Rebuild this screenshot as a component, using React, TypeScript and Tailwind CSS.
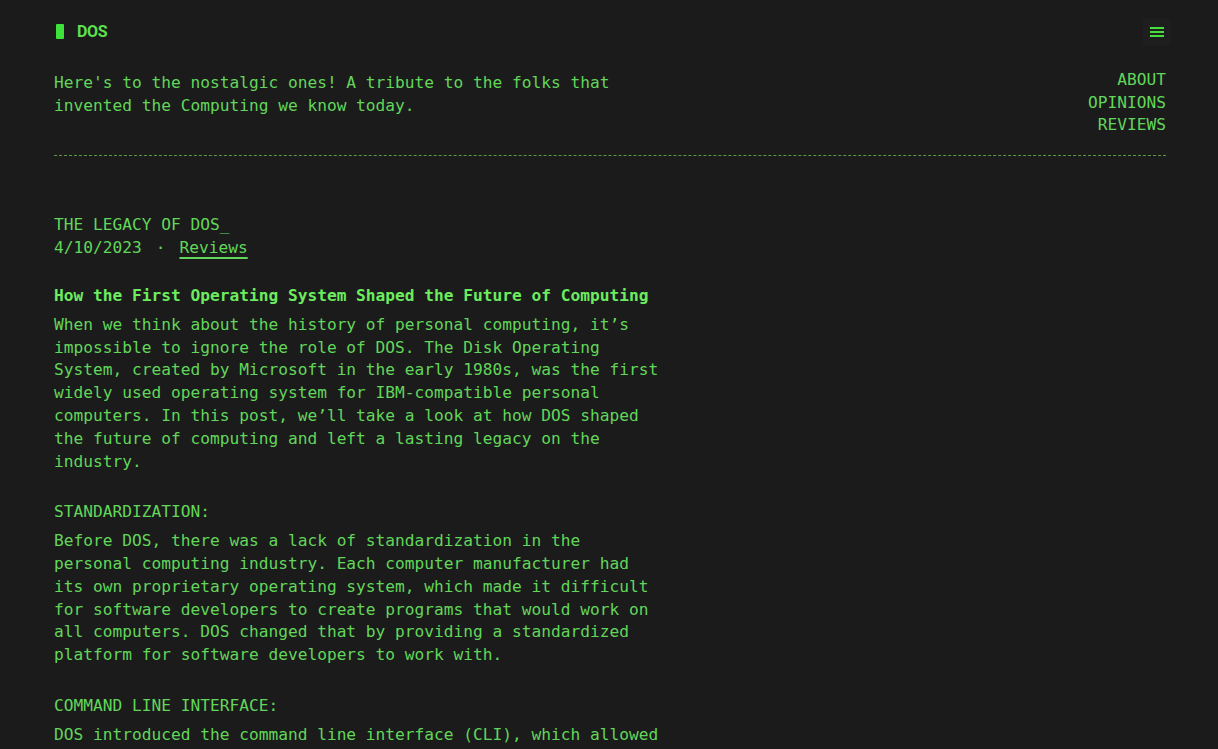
import React from "react";

const mono = { fontFamily: '"DejaVu Sans Mono", "Liberation Mono", monospace' };

export default function App() {
  return (
    <div
      className="min-h-[749px] w-full bg-[#1b1b1b] text-[#62d65a] text-[16.2px] leading-[22.8px] pl-[54px] pr-[52px]"
      style={mono}
    >
      <div className="w-full">
        <header className="flex items-center justify-between pt-[18px] h-[46px]">
          <div className="flex items-center">
            <span className="ml-[2px] inline-block h-[15px] w-[8px] bg-[#3ee23a] rounded-[1px]" />
            <span
              className="ml-[13px] font-bold text-[16px] text-[#5ee04f] tracking-[-0.3px]"
              style={{ fontFamily: '"Roboto", "Liberation Sans", sans-serif' }}
            >
              DOS
            </span>
          </div>
          <button className="flex h-[28px] w-[28px] items-center justify-center rounded-[2px] bg-[#1e1e1e] mr-[-5px]">
            <span className="flex flex-col gap-[2px]">
              <span className="block h-[2px] w-[14px] bg-[#44e03a]" />
              <span className="block h-[2px] w-[14px] bg-[#44e03a]" />
              <span className="block h-[2px] w-[14px] bg-[#44e03a]" />
            </span>
          </button>
        </header>

        <div className="flex items-start justify-between border-b border-dashed border-[#5a9a44] pb-[18px]">
          <p className="mt-[26px] w-[608px]">
            Here's to the nostalgic ones! A tribute to the folks that invented the Computing we know
            today.
          </p>
          <nav className="mt-[23px] flex flex-col items-end leading-[22.5px]">
            <a>ABOUT</a>
            <a>OPINIONS</a>
            <a>REVIEWS</a>
          </nav>
        </div>

        <main className="pt-[58px] w-[608px]">
          <h1>THE LEGACY OF DOS_</h1>
          <div className="flex mt-[1px]">
            <span>4/10/2023</span>
            <span className="mx-[14px]">·</span>
            <a className="underline decoration-2 underline-offset-[4px]">Reviews</a>
          </div>

          <h2 className="mt-[25px] font-bold text-[#6cec5e]">
            How the First Operating System Shaped the Future of Computing
          </h2>
          <p className="mt-[6px]">
            When we think about the history of personal computing, it’s impossible to ignore the role
            of DOS. The Disk Operating System, created by Microsoft in the early 1980s, was the first
            widely used operating system for IBM-compatible personal computers. In this post, we’ll
            take a look at how DOS shaped the future of computing and left a lasting legacy on the
            industry.
          </p>

          <h3 className="mt-[28px]">STANDARDIZATION:</h3>
          <p className="mt-[6px]">
            Before DOS, there was a lack of standardization in the personal computing industry. Each
            computer manufacturer had its own proprietary operating system, which made it difficult
            for software developers to create programs that would work on all computers. DOS changed
            that by providing a standardized platform for software developers to work with.
          </p>

          <h3 className="mt-[28px]">COMMAND LINE INTERFACE:</h3>
          <p className="mt-[6px]">
            DOS introduced the command line interface (CLI), which allowed users to interact with the
            computer by typing commands. This was a major step forward in usability.
          </p>
        </main>
      </div>
    </div>
  );
}
